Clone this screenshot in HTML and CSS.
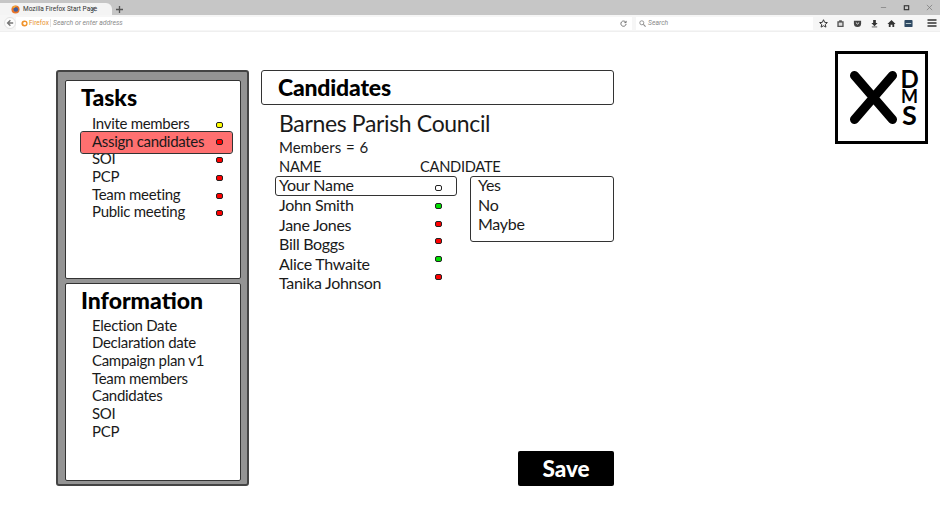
FILE: index.html
```html
<!DOCTYPE html>
<html lang="en">
<head>
    <meta charset="UTF-8">
    <title>Candidates</title>
    <link rel="stylesheet" href="styles.css">
</head>
<body>
<!-- Browser chrome -->
<div class="tabbar">
    <div class="tab">
        <svg class="tab-icon" viewBox="0 0 10 10"><circle cx="5" cy="5" r="4.5" fill="#e8742a"/><circle cx="5.4" cy="5" r="2.6" fill="#3f5f9e"/><path d="M1 3 Q3 0 7 1 Q4 1.500 4 3 Z" fill="#f5b335"/></svg>
        <span class="tab-title">Mozilla Firefox Start Page</span>
        <svg class="tab-close" viewBox="0 0 7 7"><path d="M1 1 6 6M6 1 1 6" stroke="#666" stroke-width="1"/></svg>
    </div>
    <svg class="tab-new" viewBox="0 0 8 8"><path d="M4 0V8M0 4H8" stroke="#555" stroke-width="1.500"/></svg>
    <div class="window-btns">
        <svg viewBox="0 0 8 8"><path d="M1 4H7" stroke="#888" stroke-width="1"/></svg>
        <svg viewBox="0 0 8 8"><rect x="1.500" y="2" width="5" height="4.500" fill="none" stroke="#333" stroke-width="1.300"/></svg>
        <svg viewBox="0 0 8 8"><path d="M1 1 7 7M7 1 1 7" stroke="#777" stroke-width="0.800"/></svg>
    </div>
</div>
<div class="navbar">
    <div class="back">
        <svg viewBox="0 0 10 10"><path d="M9 5H3M5.500 1.500 2 5l3.500 3.500" fill="none" stroke="#777" stroke-width="1.800"/></svg>
    </div>
    <div class="urlbar">
        <svg class="ff-mark" viewBox="0 0 8 8"><circle cx="4" cy="4" r="3.500" fill="#f0932b"/><circle cx="4.300" cy="4" r="1.700" fill="#fff"/></svg>
        <span class="ff-label">Firefox</span>
        <span class="url-text">Search or enter address</span>
        <svg class="reload" viewBox="0 0 8 8"><path d="M6.500 2.500A3 3 0 1 0 7 4.500M7 1V3H5" fill="none" stroke="#666" stroke-width="1"/></svg>
    </div>
    <div class="searchbar">
        <svg viewBox="0 0 8 8"><circle cx="3.200" cy="3.200" r="2.300" fill="none" stroke="#888" stroke-width="1"/><path d="M5 5 7.500 7.500" stroke="#888" stroke-width="1.200"/></svg>
        <span>Search</span>
    </div>
    <div class="toolbar">
        <svg viewBox="0 0 10 10"><path d="M5 .8 6.300 3.700 9.300 4 7 6 7.700 9 5 7.500 2.300 9 3 6 .7 4 3.700 3.700Z" fill="none" stroke="#333" stroke-width="1.100"/></svg>
        <svg viewBox="0 0 10 10"><path d="M1.500 2.500H3.500V1.500H6.500V2.500H8.500V9H1.500Z" fill="#555"/><rect x="3" y="4" width="4" height="3.500" fill="#ddd"/></svg>
        <svg viewBox="0 0 10 10"><path d="M1 2H9V5A4 4 0 0 1 1 5Z" fill="#444"/><path d="M3.200 4 5 5.600 6.800 4" fill="none" stroke="#fff" stroke-width="1"/></svg>
        <svg viewBox="0 0 10 10"><path d="M3.500 1H6.500V4.500H8.500L5 8 1.500 4.500H3.500Z" fill="#333"/><rect x="2" y="8.300" width="6" height="1" fill="#555"/></svg>
        <svg viewBox="0 0 10 10"><path d="M5 1 9.500 5.500H8V9H6V6.500H4V9H2V5.500H.5Z" fill="#333"/></svg>
        <svg viewBox="0 0 10 10"><rect x=".5" y="1" width="9" height="8" rx="1" fill="#2f4a63"/><rect x="2" y="4.500" width="6" height="1" fill="#cdd"/></svg>
        <svg class="menu" viewBox="0 0 10 10"><path d="M.5 2H9.500M.5 5H9.500M.5 8H9.500" stroke="#333" stroke-width="1.500"/></svg>
    </div>
</div>

<div class="page">
    <!-- Left column -->
    <div class="sidebar">
        <div class="panel">
            <h2 class="panel-title">Tasks</h2>
            <ul class="task-list tasks">
                <li>Invite members<span class="dot yellow"></span></li>
                <li class="current">Assign candidates<span class="dot red"></span></li>
                <li>SOI<span class="dot red"></span></li>
                <li>PCP<span class="dot red"></span></li>
                <li>Team meeting<span class="dot red"></span></li>
                <li>Public meeting<span class="dot red"></span></li>
            </ul>
        </div>
        <div class="panel">
            <h2 class="panel-title">Information</h2>
            <ul class="task-list">
                <li>Election Date</li>
                <li>Declaration date</li>
                <li>Campaign plan v1</li>
                <li>Team members</li>
                <li>Candidates</li>
                <li>SOI</li>
                <li>PCP</li>
            </ul>
        </div>
    </div>

    <!-- Main content -->
    <div class="main">
        <h1 class="main-title">Candidates</h1>
        <div class="council">Barnes Parish Council</div>
        <div class="members">Members = 6</div>
        <div class="col-heads">
            <span class="head-name">NAME</span>
            <span>CANDIDATE</span>
        </div>
        <div class="picker">
            <div class="names">
                <div class="name-row selected">Your Name</div>
                <div class="name-row">John Smith</div>
                <div class="name-row">Jane Jones</div>
                <div class="name-row">Bill Boggs</div>
                <div class="name-row">Alice Thwaite</div>
                <div class="name-row">Tanika Johnson</div>
            </div>
            <div class="votes">
                <span class="dot empty"></span>
                <span class="dot green"></span>
                <span class="dot red"></span>
                <span class="dot red"></span>
                <span class="dot green"></span>
                <span class="dot red"></span>
            </div>
            <div class="options">
                <div>Yes</div>
                <div>No</div>
                <div>Maybe</div>
            </div>
        </div>
        <button class="save">Save</button>
    </div>

    <!-- Logo -->
    <div class="logo">
        <svg class="logo-x" viewBox="0 0 47 53"><path d="M4.500 4.500 42.500 48.500M42.500 4.500 4.500 48.500" stroke="#000" stroke-width="9" stroke-linecap="round"/></svg>
        <div class="logo-letters"><span class="letter-d">D</span><span class="letter-m">M</span><span class="letter-s">S</span></div>
    </div>
</div>
</body>
</html>
```
FILE: styles.css
```css
* {
    box-sizing: border-box;
    margin: 0;
    padding: 0;
}
body {
    font-family: 'Lato', 'Liberation Sans', sans-serif;
    background-color: #ffffff;
    color: #1a1a1a;
    overflow: hidden;
}

/* Browser chrome */
.tabbar {
    height: 15px;
    background-color: #c6c6c6;
    display: flex;
    align-items: flex-end;
}
.tab {
    width: 112px;
    height: 12px;
    background-color: #f4f4f4;
    border-radius: 0 6px 0 0;
    display: flex;
    align-items: center;
    padding-left: 11px;
}
.tab-icon {
    width: 9px;
    height: 9px;
    margin-right: 3px;
}
.tab-title {
    font-family: 'Roboto', sans-serif;
    font-size: 6.500px;
    color: #333;
    width: 66px;
    white-space: nowrap;
}
.tab-close {
    width: 6px;
    height: 6px;
    margin-left: 1px;
}
.tab-new {
    width: 7px;
    height: 7px;
    margin: 0 0 2px 4px;
}
.window-btns {
    margin-left: auto;
    display: flex;
    gap: 16px;
    align-self: center;
    padding-right: 7px;
}
.window-btns svg {
    width: 7px;
    height: 7px;
}
.navbar {
    height: 17px;
    background-color: #f6f6f6;
    display: flex;
    align-items: center;
    border-bottom: 1px solid #efefef;
}
.back {
    width: 12px;
    height: 12px;
    margin-left: 4px;
    border-radius: 50%;
    background-color: #fdfdfd;
    border: 1px solid #e2e2e2;
    display: flex;
    align-items: center;
    justify-content: center;
}
.back svg {
    width: 8px;
    height: 8px;
}
.urlbar {
    width: 616px;
    height: 13px;
    background-color: #ffffff;
    display: flex;
    align-items: center;
    padding-left: 5px;
}
.ff-mark {
    width: 7px;
    height: 7px;
    margin-right: 1px;
}
.ff-label {
    font-family: 'Roboto', sans-serif;
    font-size: 6.500px;
    color: #e8922f;
    width: 22px;
    border-right: 1px solid #e2e2e2;
}
.url-text {
    font-family: 'Roboto', sans-serif;
    font-size: 6.800px;
    font-style: italic;
    color: #8a8a8a;
    margin-left: 2px;
}
.reload {
    width: 7px;
    height: 7px;
    margin-left: auto;
    margin-right: 5px;
}
.searchbar {
    width: 177px;
    height: 13px;
    margin-left: 4px;
    background-color: #ffffff;
    display: flex;
    align-items: center;
    padding-left: 3px;
    font-family: 'Roboto', sans-serif;
    font-size: 6.800px;
    font-style: italic;
    color: #8a8a8a;
}
.searchbar svg {
    width: 7px;
    height: 7px;
    margin-right: 2px;
}
.toolbar {
    display: flex;
    align-items: center;
    gap: 8px;
    margin-left: 6px;
}
.toolbar svg {
    width: 9px;
    height: 9px;
}
.toolbar .menu {
    margin-left: 6px;
    width: 10px;
    height: 10px;
}

/* Page */
.page {
    display: flex;
    align-items: flex-start;
    padding: 19px 12px 0 56px;
}

/* Sidebar */
.sidebar {
    width: 193px;
    height: 416px;
    margin-top: 19px;
    background-color: #949494;
    border: 2px solid #444;
    border-radius: 3px;
    padding: 8px 6px 3px 7px;
    display: flex;
    flex-direction: column;
    gap: 4px;
}
.panel {
    flex: 1;
    background-color: #ffffff;
    border: 1px solid #333;
    border-radius: 2px;
    padding: 1px 8px 0 15px;
}
.panel-title {
    font-size: 23px;
    line-height: 30px;
    font-weight: 900;
    color: #000;
    margin-bottom: 2px;
}
.task-list {
    list-style: none;
    font-size: 15px;
    letter-spacing: -0.3px;
}
.task-list.tasks {
    margin-top: 3px;
}
.task-list li {
    height: 17.700px;
    line-height: 17.700px;
    padding-left: 11px;
    padding-right: 9px;
    display: flex;
    align-items: center;
    justify-content: space-between;
}
.task-list .current {
    background-color: #ff7070;
    outline: 1px solid #333;
    border-radius: 2px;
    height: 21px;
    margin-top: -1px;
    margin-bottom: -2.300px;
    width: 151px;
}
.task-list .current .dot {
    margin-top: 0;
}
.dot {
    width: 7px;
    height: 6px;
    border: 1px solid #222;
    border-radius: 2px;
    display: block;
    flex: none;
    margin-top: 2px;
}
.dot.yellow { background-color: #ffff00; }
.dot.red { background-color: #ff0000; }
.dot.green { background-color: #00e000; }
.dot.empty { background-color: #ffffff; }

/* Main */
.main {
    width: 353px;
    height: 416px;
    margin-top: 19px;
    margin-left: 12px;
    display: flex;
    flex-direction: column;
}
.main-title {
    height: 35px;
    border: 1px solid #333;
    border-radius: 3px;
    padding-left: 16px;
    font-size: 23px;
    line-height: 33px;
    font-weight: 900;
    letter-spacing: -0.2px;
    color: #000;
}
.council {
    font-size: 23px;
    line-height: 28px;
    font-weight: 400;
    letter-spacing: -0.35px;
    padding-left: 18px;
    margin-top: 4px;
}
.members, .col-heads {
    font-size: 15px;
    line-height: 19px;
    padding-left: 18px;
}
.members {
    margin-top: 1px;
    word-spacing: 1px;
}
.col-heads {
    display: flex;
    font-size: 14.700px;
    letter-spacing: -0.3px;
}
.head-name {
    width: 141px;
}
.picker {
    display: grid;
    grid-template-columns: 182px 144px;
    column-gap: 13px;
    margin: 0 0 0 14px;
}
.names, .votes {
    grid-row: 1;
    grid-column: 1;
}
.name-row {
    height: 19.500px;
    line-height: 18px;
    font-size: 16px;
    letter-spacing: -0.3px;
    padding-left: 4px;
}
.name-row.selected {
    height: 20px;
    border: 1px solid #333;
    border-radius: 3px;
    padding-left: 3px;
    line-height: 16px;
}
.votes {
    padding: 7px 0 0 160px;
    display: flex;
    flex-direction: column;
    gap: 9.800px;
}
.options {
    grid-row: 1;
    grid-column: 2;
    height: 66px;
    border: 1px solid #333;
    border-radius: 3px;
    padding-left: 7px;
    font-size: 16px;
    letter-spacing: -0.3px;
    line-height: 19.500px;
}
.options div:first-child {
    margin-top: -2px;
}
.save {
    margin-top: auto;
    align-self: flex-end;
    width: 96px;
    height: 35px;
    background-color: #000;
    border: none;
    border-radius: 2px;
    color: #ffffff;
    font-family: inherit;
    font-size: 22.500px;
    font-weight: 900;
}

/* Logo */
.logo {
    width: 93px;
    height: 93px;
    margin-left: auto;
    border: 3px solid #000;
    display: flex;
    align-items: center;
    padding-left: 12px;
}
.logo-x {
    width: 47px;
    height: 53px;
    flex: none;
}
.logo-letters {
    display: flex;
    flex-direction: column;
    align-items: center;
    margin-left: 5px;
    width: 15px;
    color: #000;
    font-weight: 700;
}
.letter-d {
    font-size: 24px;
    line-height: 20px;
}
.letter-m {
    font-size: 18px;
    line-height: 15px;
}
.letter-s {
    font-size: 27px;
    line-height: 22px;
}
```
